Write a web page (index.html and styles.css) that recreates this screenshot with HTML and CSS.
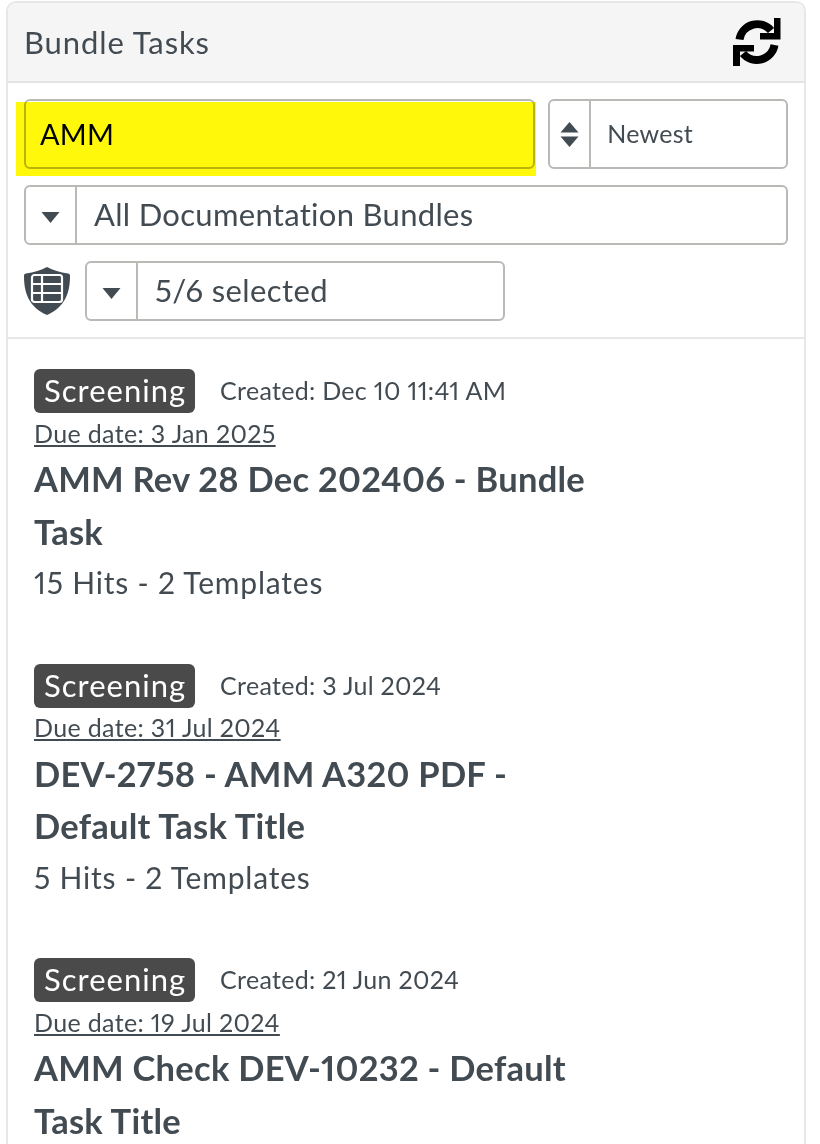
FILE: index.html
```html
<!DOCTYPE html>
<html lang="en">
<head>
<meta charset="utf-8">
<title>Bundle Tasks</title>
<link rel="stylesheet" href="styles.css">
</head>
<body>
<section class="panel">
  <header class="panel-head">
    <h1 class="panel-title">Bundle Tasks</h1>
    <svg class="refresh" viewBox="0 0 48 48" aria-hidden="true">
      <path class="refresh-arc" d="M6.500 21.500A18 18 0 0 1 38 12.500"/>
      <path d="M47.500 0v21.500H27V15h14V0z"/>
      <path class="refresh-arc" d="M41.500 27A18 18 0 0 1 10 35.500"/>
      <path d="M0 48V27h21v6.500H7V48z"/>
    </svg>
  </header>
  <div class="filters">
    <div class="filter-row">
      <div class="search-wrap">
        <div class="field search">AMM</div>
        <div class="highlight"></div>
      </div>
      <div class="field sort">
        <span class="addon addon-sort">
          <svg class="updown" viewBox="0 0 19 25" aria-hidden="true"><path d="M9.500 0l9 10.500H.5zM9.500 25l-9-10.500h18z"/></svg>
        </span>
        <span class="sort-value">Newest</span>
      </div>
    </div>
    <div class="field select">
      <span class="addon"><svg class="caret" viewBox="0 0 19 11" aria-hidden="true"><path d="M.5 0h18L9.500 11z"/></svg></span>
      <span class="select-value">All Documentation Bundles</span>
    </div>
    <div class="filter-row template-row">
      <svg class="shield" viewBox="0 0 46 48" aria-hidden="true">
        <path d="M23 0c6 3 13 5.500 21 6.500 1.500.2 2 1 2 2.500 0 17-5 31-23 39C5 40 0 26 0 9c0-1.500.5-2.300 2-2.500C10 5.500 17 3 23 0z"/>
        <g class="shield-grid">
          <rect x="8" y="8" width="30" height="27" rx="2.500"/>
          <path d="M8 17h30M8 26h30M18 8v27"/>
        </g>
      </svg>
      <div class="field select template-select">
        <span class="addon"><svg class="caret" viewBox="0 0 19 11" aria-hidden="true"><path d="M.5 0h18L9.500 11z"/></svg></span>
        <span class="select-value">5/6 selected</span>
      </div>
    </div>
  </div>
  <ul class="tasks">
    <li class="task">
      <div class="task-meta"><span class="badge">Screening</span><span class="created">Created: Dec 10 11:41 AM</span></div>
      <div class="due">Due date: 3 Jan 2025</div>
      <h2 class="task-title">AMM Rev 28 Dec 202406 - Bundle Task</h2>
      <p class="hits">15 Hits - 2 Templates</p>
    </li>
    <li class="task">
      <div class="task-meta"><span class="badge">Screening</span><span class="created">Created: 3 Jul 2024</span></div>
      <div class="due">Due date: 31 Jul 2024</div>
      <h2 class="task-title">DEV-2758 - AMM A320 PDF - Default Task Title</h2>
      <p class="hits">5 Hits - 2 Templates</p>
    </li>
    <li class="task">
      <div class="task-meta"><span class="badge">Screening</span><span class="created">Created: 21 Jun 2024</span></div>
      <div class="due">Due date: 19 Jul 2024</div>
      <h2 class="task-title">AMM Check DEV-10232 - Default Task Title</h2>
      <p class="hits">5 Hits - 2 Templates</p>
    </li>
  </ul>
</section>
</body>
</html>
```
FILE: styles.css
```css
* { box-sizing: border-box; }
html, body { margin: 0; height: 100%; overflow: hidden; background: #fff; }
body {
  padding: 1px 0 0 6px;
  font-family: Lato, "Open Sans", "Liberation Sans", sans-serif;
  font-variant-numeric: proportional-nums;
  color: #434b52;
}
.panel {
  width: 800px;
  height: 1300px;
  border: 2px solid #e7e7e7;
  border-radius: 10px;
  background: #fff;
}
.panel-head {
  height: 80px;
  display: flex;
  align-items: center;
  justify-content: space-between;
  padding: 0 23px 0 16px;
  background: #f5f5f5;
  border-bottom: 2px solid #e4e4e4;
  border-radius: 8px 8px 0 0;
}
.panel-title { margin: 0; font-size: 31px; font-weight: 400; letter-spacing: .9px; }
.refresh { width: 48px; height: 48px; fill: #000; }
.refresh-arc { fill: none; stroke: #000; stroke-width: 8; }
.filters {
  display: flex;
  flex-direction: column;
  gap: 16px;
  padding: 16px;
  border-bottom: 2px solid #e7e7e7;
}
.filter-row { display: flex; gap: 13px; }
.field {
  display: flex;
  align-items: center;
  height: 60px;
  background: #fff;
  border: 2px solid #b9b9b5;
  border-radius: 6px;
}
.search-wrap { position: relative; width: 512px; }
.search {
  height: 70px;
  padding: 0 0 2px 14px;
  font-size: 29px;
  color: #000;
  letter-spacing: .2px;
}
.highlight {
  position: absolute;
  left: -8px;
  right: -1px;
  top: 3px;
  height: 74px;
  background: #fff80a;
  mix-blend-mode: multiply;
}
.sort { height: 70px; width: 240px; }
.addon {
  flex: none;
  width: 51px;
  height: 100%;
  display: flex;
  align-items: center;
  justify-content: center;
  border-right: 2px solid #b9b9b5;
}
.addon-sort { width: 41px; }
.updown { width: 19px; height: 25px; fill: #434b52; }
.caret { width: 19px; height: 11px; fill: #434b52; position: relative; top: 2px; }
.sort-value { padding: 0 0 2px 16px; font-size: 25px; letter-spacing: .25px; }
.select-value { padding: 0 0 2px 17px; font-size: 31px; letter-spacing: .3px; }
.template-select .select-value { letter-spacing: .4px; }
.template-row { align-items: center; gap: 15px; }
.shield { width: 46px; height: 48px; flex: none; fill: #434b52; }
.shield-grid rect, .shield-grid path { fill: none; stroke: #fff; stroke-width: 2.200; }
.template-select { width: 420px; }
.tasks { list-style: none; margin: 0; padding: 30px 26px 0; }
.task { margin-bottom: 55.500px; }
.task-meta { display: flex; align-items: center; gap: 25px; }
.badge {
  height: 44px;
  padding: 0 9px 2px 10px;
  display: flex;
  align-items: center;
  background: #4a4a4a;
  color: #fff;
  border-radius: 6px;
  font-size: 31px;
  letter-spacing: 1px;
}
.created { padding-bottom: 2px; font-size: 25px; letter-spacing: .3px; }
.due {
  margin-top: 4.500px;
  font-size: 25px;
  line-height: 30px;
  text-decoration: underline;
  letter-spacing: .35px;
}
.task-title {
  margin: 5.500px 0 0;
  max-width: 570px;
  font-size: 34.500px;
  line-height: 52.500px;
  font-weight: 700;
  letter-spacing: .25px;
}
.hits { margin: -1px 0 0; font-size: 30px; line-height: 51px; letter-spacing: .8px; }
```
